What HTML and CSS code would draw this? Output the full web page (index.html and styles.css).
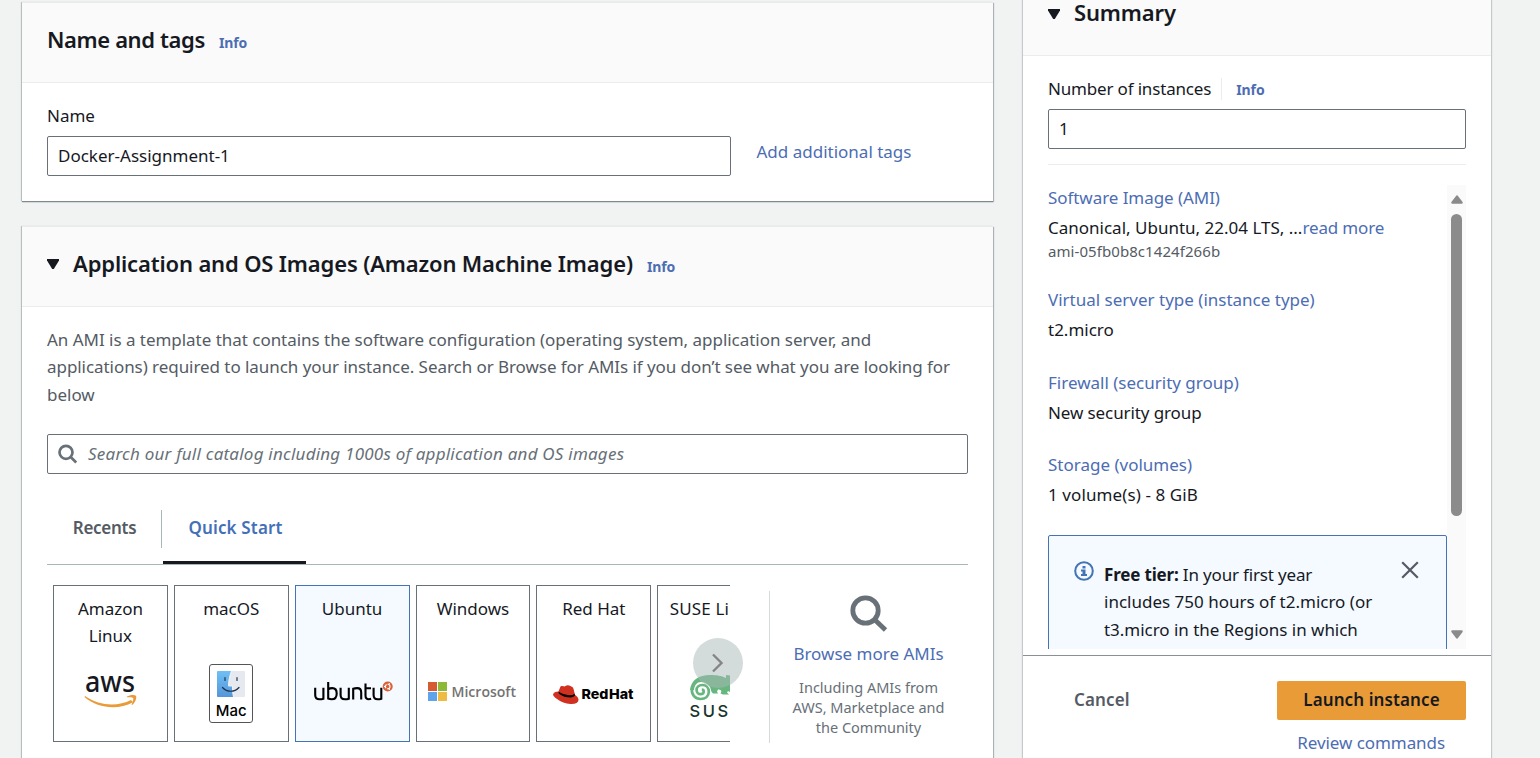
FILE: index.html
```html
<!DOCTYPE html>
<html lang="en">
<head>
<meta charset="utf-8">
<title>Launch an instance</title>
<link rel="stylesheet" href="styles.css">
</head>
<body>
<div class="page">
  <main class="main">
    <section class="panel">
      <header class="panel-head"><h2 class="t-names">Name and tags</h2><a class="info">Info</a></header>
      <div class="name-body">
        <div class="name-field">
          <label class="label">Name</label>
          <div class="input t-docker">Docker-Assignment-1</div>
        </div>
        <a class="link add-tags">Add additional tags</a>
      </div>
    </section>

    <section class="panel images">
      <header class="panel-head"><svg class="caret" viewBox="0 0 14 12"><path d="M1 1h12v1.500L7.800 11H6.200L1 2.500z"/></svg><h2 class="t-app">Application and OS Images (Amazon Machine Image)</h2><a class="info">Info</a></header>
      <div class="images-body">
        <p class="desc"><span class="d1">An AMI is a template that contains the software configuration (operating system, application server, and</span><br><span class="d2">applications) required to launch your instance. Search or Browse for AMIs if you don’t see what you are looking for</span><br><span class="d3">below</span></p>
        <div class="search">
          <svg class="search-icon" viewBox="0 0 20 20"><circle cx="8" cy="8.300" r="6.500"/><path d="M12.700 13l5.500 5.500"/></svg>
          <span class="placeholder">Search our full catalog including 1000s of application and OS images</span>
        </div>
        <nav class="tabs">
          <a class="tab recents">Recents</a>
          <a class="tab active">Quick Start</a>
        </nav>
        <div class="quick">
          <div class="carousel">
            <div class="tiles">
              <div class="tile"><span class="os">Amazon<br>Linux</span>
                <svg class="logo aws" viewBox="0 0 54 38"><text x="1" y="18.500" textLength="50" lengthAdjust="spacingAndGlyphs">aws</text><path class="smile" d="M1 23c15 10.500 33 10.500 46 4l2 2.200C34 37.500 14 35.500.500 24z"/><path class="smile" d="M43 23.500c3-2 8-2 9-.6 1 1.500-.5 6-3.500 8.800-.7.400-1 .1-.8-.5 1-2.500 2-5.600 1.500-6.300-.8-.9-3.600-.8-5.800-.6-.7 0-.9-.400-.4-.8z"/></svg></div>
              <div class="tile"><span class="os">macOS</span>
                <div class="mac"><svg viewBox="0 0 28 26"><defs><linearGradient id="sky" x1="0" y1="0" x2="0" y2="1"><stop offset="0" stop-color="#6fc0f4"/><stop offset="1" stop-color="#5595da"/></linearGradient></defs><rect width="28" height="26" rx="1" fill="#e6e9ef"/><path d="M1 0h13.500C12.500 5 11.500 10 11.500 15h4c0 4 .2 8 1 11H1a1 1 0 0 1-1-1V1a1 1 0 0 1 1-1z" fill="url(#sky)"/><path d="M14.500 0c-2 5-3 10-3 15h4c0 4 .2 8 1 11" fill="none" stroke="#f7f9fb" stroke-width=".9"/><path d="M8 6.500v3M20 6.500v3M5.500 16.500c4.500 5 12 5 16.500 0" fill="none" stroke="#20354b" stroke-width="1.200" stroke-linecap="round"/></svg><span>Mac</span></div></div>
              <div class="tile selected"><span class="os">Ubuntu</span>
                <svg class="logo ubuntu" viewBox="0 0 80 24"><g class="letters"><path d="M1.200 6.700v7.300q0 4.300 4.300 4.300 2.200 0 3.900-.6V6.700"/><path d="M14.200 1v16.500q1.500.7 3.500.7 5 0 5-5.800 0-5.300-4.400-5.300-2.400 0-4.100 1.200"/><path d="M26.600 6.700v7.300q0 4.300 4.300 4.300 2.200 0 3.900-.6V6.700"/><path d="M39.200 18.500V7.700q1.700-.6 3.900-.6 4.100 0 4.100 4.300v7.100"/><path d="M51.500 2.500v12q0 3.700 3.300 3.700 1.300 0 2.300-.4M51.500 7.300h5.500"/><path d="M59.600 6.700v7.300q0 4.300 4.100 4.300 2.200 0 3.600-.6V6.700"/></g><circle cx="73.700" cy="5.500" r="5" fill="#d9623a"/><circle cx="73.700" cy="5.500" r="2.300" fill="none" stroke="#fff" stroke-width="1.100" stroke-dasharray="3.900 .9" /><g fill="#fff"><circle cx="70.600" cy="5.500" r=".7"/><circle cx="75.300" cy="2.800" r=".7"/><circle cx="75.300" cy="8.200" r=".7"/></g></svg></div>
              <div class="tile"><span class="os">Windows</span>
                <svg class="logo ms" viewBox="0 0 90 20"><path fill="#d65a31" d="M0 0h9v9H0z"/><path fill="#8db936" d="M10 0h9v9h-9z"/><path fill="#5fa3ea" d="M0 10h9v9H0z"/><path fill="#eebb43" d="M10 10h9v9h-9z"/><text x="23.500" y="15" textLength="64.500" lengthAdjust="spacingAndGlyphs">Microsoft</text></svg></div>
              <div class="tile"><span class="os">Red Hat</span>
                <svg class="logo redhat" viewBox="0 0 82 20"><path fill="#d03020" d="M5.500 6.500L7.500 1.500Q8 .6 9.500 1l2 .5 2-1.100q1.300-.5 2.800.2l2.600 1.200q1.200.6 1.600 2l1.400 6q3.700 2.300 3.600 5.200-.4 4.300-8 4-7.600-.5-13.500-5Q-.200 11 .1 9.200.8 6.800 5.500 6.500z"/><path d="M5.600 6.800q-.3 1.300.7 2.100 4.800 3.500 11.500 3.500 3.300-.1 4.200-1.800l-.6-2.200q-1.200 2.300-5.300 1.900Q9.700 9.700 5.600 6.800z"/><text x="28.500" y="14" textLength="52" lengthAdjust="spacingAndGlyphs">Red Hat</text></svg></div>
              <div class="tile suse-tile"><span class="os">SUSE Linux</span>
                <svg class="logo suse" viewBox="0 0 64 44"><path fill="#67b67f" d="M0 16C1 6 9 1 20 1c7 0 11 .8 16 3V1c8 1 16 3 19 8v9c-5 2-12 2-17-1l-1 1.500 2 2h-6l-2.500-1c2-2.500 0-4.500-2.500-4l-1 2 1 2h-5c-2-1.500-2-4-3-6.500C18 10 15 8 11 8 7 8 4.500 11 4 16z"/><path class="tail" d="M2 14.500C1 21 5.500 25 10.500 25c5 0 8.300-3 8.300-7.300 0-3.900-2.800-6.700-6.600-6.700-3.400 0-5.600 2.300-5.600 5 0 2.400 1.700 4.200 4 4.200 1.900 0 3.100-1.200 3.100-2.700 0-1.100-.8-1.900-1.900-1.900"/><text x="-.5" y="42.500" textLength="51">SUSE</text></svg></div>
            </div>
            <button class="next"><svg viewBox="0 0 14 20"><path d="M2 1.500l8.500 8.500L2 18.500"/></svg></button>
          </div>
          <aside class="browse">
            <svg class="big-search" viewBox="0 0 38 38"><circle cx="15.500" cy="15.500" r="12.700"/><path d="M24.500 24.500l11 10.500"/></svg>
            <a class="link t-browse">Browse more AMIs</a>
            <p><span class="b1">Including AMIs from</span><br><span class="b2">AWS, Marketplace and</span><br><span class="b3">the Community</span></p>
          </aside>
        </div>
      </div>
    </section>
  </main>

  <aside class="summary">
    <header class="sum-head"><svg class="caret" viewBox="0 0 14 12"><path d="M1 1h12v1.500L7.800 11H6.200L1 2.500z"/></svg><h2 class="t-sum">Summary</h2></header>
    <div class="sum-body">
      <div class="count-label"><label class="t-num">Number of instances</label><a class="info">Info</a></div>
      <div class="input count">1</div>
      <div class="scroll">
        <div class="scroll-content">
          <dl>
            <dt class="s1">Software Image (AMI)</dt>
            <dd class="s2">Canonical, Ubuntu, 22.04 LTS, ...<a class="link">read more</a></dd>
            <dd class="ami">ami-05fb0b8c1424f266b</dd>
            <dt class="s3">Virtual server type (instance type)</dt>
            <dd>t2.micro</dd>
            <dt class="s4">Firewall (security group)</dt>
            <dd class="s5">New security group</dd>
            <dt class="s6">Storage (volumes)</dt>
            <dd class="s7">1 volume(s) - 8 GiB</dd>
          </dl>
          <div class="alert">
            <svg class="i-icon" viewBox="0 0 20 20"><circle cx="10" cy="10" r="8.800"/><path d="M8.500 5h3v2.500h-3zM7 8.500h4.500v4.500H13v2H7v-2h1.500v-2.500H7z"/></svg>
            <p><span class="f1"><b>Free tier:</b> In your first year</span><br><span class="f2">includes 750 hours of t2.micro (or</span><br><span class="f3">t3.micro in the Regions in which</span></p>
            <svg class="close" viewBox="0 0 18 18"><path d="M1.200 1.200l15.600 15.600M16.800 1.200L1.200 16.800"/></svg>
          </div>
        </div>
        <div class="bar">
          <svg viewBox="0 0 12 9"><path d="M6 .3q.6 0 1 .7l4.600 6q.6 1.700-1 1.700H1.400q-1.600 0-1-1.700L5 1q.400-.7 1-.7z"/></svg>
          <div class="thumb"></div>
          <svg class="down" viewBox="0 0 12 9"><path d="M6 .3q.6 0 1 .7l4.600 6q.6 1.700-1 1.700H1.400q-1.600 0-1-1.700L5 1q.400-.7 1-.7z"/></svg>
        </div>
      </div>
    </div>
    <footer class="sum-foot">
      <div class="actions"><a class="cancel">Cancel</a><button class="launch">Launch instance</button></div>
      <a class="link review">Review commands</a>
    </footer>
  </aside>
</div>
</body>
</html>
```
FILE: styles.css
```css
* { box-sizing: border-box; }
body {
  margin: 0;
  height: 758px;
  overflow: hidden;
  background: #f1f3f3;
  color: #16191f;
  font: 17px/27px "Noto Sans", "Open Sans", sans-serif;
  white-space: nowrap;
}
h2, p, dl, dd { margin: 0; }
h2 { font-size: 22px; line-height: 30px; font-weight: 600; margin-top: -4px; }
button { border: 0; padding: 0; font: inherit; }
svg { display: block; flex: none; }
.page { display: flex; align-items: flex-start; gap: 30px; height: 758px; padding-left: 22px; overflow: hidden; }
.main { width: 971px; padding-top: 2px; display: flex; flex-direction: column; gap: 25px; }
.panel { background: #fff; border-top: 1px solid #e9ebec; box-shadow: 0 1px 1px #7e8a90, 1px 1px 1px #b5babc, -1px 0 1px #c5c9ca; }
.panel:first-child { height: 199px; }
.images { height: 560px; }
.panel-head { height: 80px; display: flex; align-items: center; padding: 0 25px 4px; background: #fafafa; border-bottom: 1px solid #eaeded; }
.t-names { letter-spacing: -.38px; }
.t-app { letter-spacing: -.15px; }
.t-sum { letter-spacing: -.15px; }
.info { font-size: 14px; line-height: 20px; font-weight: 700; letter-spacing: -.1px; color: #4c6db3; margin: 5px 0 0 14px; }
.link, dt { color: #4c6db3; }
.caret { width: 14px; height: 12px; fill: #16191f; margin: -2px 13px 0 -1px; }
.name-body { display: flex; padding: 19px 25px 0; gap: 25.500px; }
.name-field { width: 684px; }
.label { display: block; height: 34px; }
.input { height: 40px; border: 1px solid #687078; border-radius: 2px; padding: 0 10px; line-height: 38px; background: #fff; }
.add-tags { margin-top: 36px; }
.images-body { padding: 19px 25px 0; }
.desc { color: #545b64; line-height: 27.400px; height: 108px; }
.d1 { letter-spacing: -.03px; }
.d2 { letter-spacing: -.057px; }
.search { height: 40px; border: 1px solid #687078; border-radius: 2px; display: flex; align-items: center; padding-left: 10px; gap: 10px; }
.search-icon { width: 20px; height: 20px; fill: none; stroke: #687078; stroke-width: 2.700; }
.placeholder { color: #687078; font-style: italic; letter-spacing: .222px; margin-top: -2px; }
.tabs { display: flex; height: 55px; margin-top: 36px; border-bottom: 1px solid #aab7b8; font-weight: 600; color: #545b64; }
.tab { width: 115px; height: 38px; border-right: 1px solid #aab7b8; text-align: center; line-height: 36px; }
.recents { letter-spacing: -.28px; padding-left: 1px; }
.tab.active { width: 143px; height: 54px; margin-left: 1px; border-right: 0; border-bottom: 3px solid #16191f; color: #4470b8; letter-spacing: .15px; padding-left: 2px; }
.quick { display: flex; margin-top: 20px; height: 158px; }
.carousel { position: relative; width: 683px; padding-left: 6px; }
.tiles { display: flex; gap: 6px; overflow: hidden; }
.tile { flex: none; width: 114.850px; height: 157px; border: 1px solid #687078; text-align: center; padding: 9px 0 34px; display: flex; flex-direction: column; justify-content: space-between; align-items: center; }
.tile.selected { background: #f4faff; border-color: #4474b5; }
.suse-tile { padding-bottom: 23px; }
.suse-tile .os { letter-spacing: .15px; }
.os { line-height: 27px; }
.aws { width: 54px; height: 38px; margin: 0 0 -4px 1px; overflow: visible; }
.aws text { font: 500 29px "Noto Sans", sans-serif; fill: #16191f; }
.smile { fill: #e99b38; }
.mac { width: 44px; height: 59px; margin-bottom: -16px; border: 1px solid #555; border-radius: 3px; padding-top: 6px; display: flex; flex-direction: column; align-items: center; }
.mac svg { width: 28px; height: 26px; }
.mac span { font: 500 15px/28px Inter, sans-serif; color: #000; }
.ubuntu { width: 80px; height: 24px; margin: 0 0 2px 4px; }
.letters { fill: none; stroke: #000; stroke-width: 2.100; }
.ms { width: 90px; height: 20px; margin: 0 0 5px 1px; overflow: visible; }
.ms text { font: 600 15px "Open Sans", sans-serif; fill: #737373; }
.redhat { width: 82px; height: 20px; margin-bottom: 2px; }
.redhat text { font: 800 13.500px Inter, sans-serif; word-spacing: -2.500px; fill: #000; }
.suse { width: 64px; height: 44px; margin: 0 0 0 15px; overflow: visible; }
.suse text { font: 500 16.500px Inter, sans-serif; fill: #17332c; }
.tail { fill: none; stroke: #67b67f; stroke-width: 2.700; }
.next { position: absolute; left: 646px; top: 53px; width: 50px; height: 50px; border-radius: 50%; background: rgba(170, 183, 184, .5); display: flex; align-items: center; justify-content: center; }
.next svg { width: 14px; height: 20px; fill: none; stroke: #858585; stroke-width: 2.400; }
.browse { width: 199px; height: 152px; margin: 6px 0 0 39px; border-left: 1px solid #d5dbdb; display: flex; flex-direction: column; align-items: center; text-align: center; padding: 4px 1px 0 0; color: #687078; font-size: 14.500px; line-height: 20px; }
.big-search { width: 38px; height: 38px; fill: none; stroke: #687078; stroke-width: 4.800; margin-left: 1px; }
.t-browse { font-size: 17px; line-height: 27px; margin: 7px 0 10px; }

.summary { width: 468px; height: 758px; background: #fff; box-shadow: 0 0 1px 1px #c5c9ca; display: flex; flex-direction: column; }
.sum-head { height: 56px; padding: 0 25px 28px; display: flex; align-items: center; background: #fafafa; border-bottom: 1px solid #eaeded; }
.sum-head .caret { margin-top: 0; }
.sum-body { height: 599px; padding: 20px 25px 0; }
.count-label { display: flex; height: 33px; align-items: flex-start; }
.count-label label { letter-spacing: -.17px; border-right: 1px solid #eaeded; height: 22px; line-height: 22px; margin-top: 2px; padding-right: 10px; }
.count-label .info { margin-top: 4px; }
.scroll { display: flex; height: 485px; margin-top: 15px; padding-top: 20px; border-top: 1px solid #eaeded; overflow: hidden; }
.scroll-content { width: 399px; }
dl { height: 352px; line-height: 30px; }
dt { margin-top: 22.500px; }
dt:first-child { margin-top: -2px; }
.s2 { letter-spacing: 0; }
.s2 .link { letter-spacing: -.15px; }
.s1 { letter-spacing: -.06px; }
.s4 { margin-top: 23px; }
.s5 { letter-spacing: -.1px; }
.s6 { margin-top: 22px; }
.s7 { letter-spacing: .1px; }
.ami { font-size: 15px; line-height: 17px; height: 19px; letter-spacing: .07px; color: #545b64; }
.alert { height: 150px; border: 1px solid #4474b5; border-radius: 2px; background: #f4faff; padding: 25px; display: flex; line-height: 27.300px; }
.i-icon { width: 20px; height: 20px; fill: #4474b5; }
.i-icon circle { fill: none; stroke: #4474b5; stroke-width: 2; }
.alert p { width: 268px; margin-left: 10px; }
.f1 { letter-spacing: -.17px; }
.f3 { letter-spacing: -.03px; }
.close { width: 18px; height: 18px; margin-left: 29px; stroke: #545b64; stroke-width: 2.200; }
.bar { width: 19px; height: 464px; background: #fafafa; padding: 10px 4px 10px 4px; display: flex; flex-direction: column; align-items: center; }
.bar svg { width: 12px; height: 9px; fill: #8b8b8b; }
.thumb { width: 11px; height: 302px; margin: 10px 0 auto; border-radius: 6px; background: #8b8b8b; }
.bar .down { transform: rotate(180deg); }
.sum-foot { flex: 1; border-top: 1px solid #879196; padding: 25px 25px 0 51px; display: flex; flex-direction: column; align-items: flex-end; }
.actions { width: 100%; display: flex; justify-content: space-between; font-weight: 600; }
.cancel { color: #545b64; line-height: 37px; letter-spacing: .15px; }
.launch { width: 189px; height: 39px; border-radius: 2px; background: #e99b38; color: #16191f; line-height: 36px; font-weight: 600; letter-spacing: .1px; padding-bottom: 2px; }
.review { margin: 9px 21px 0 0; letter-spacing: -.07px; }
```
